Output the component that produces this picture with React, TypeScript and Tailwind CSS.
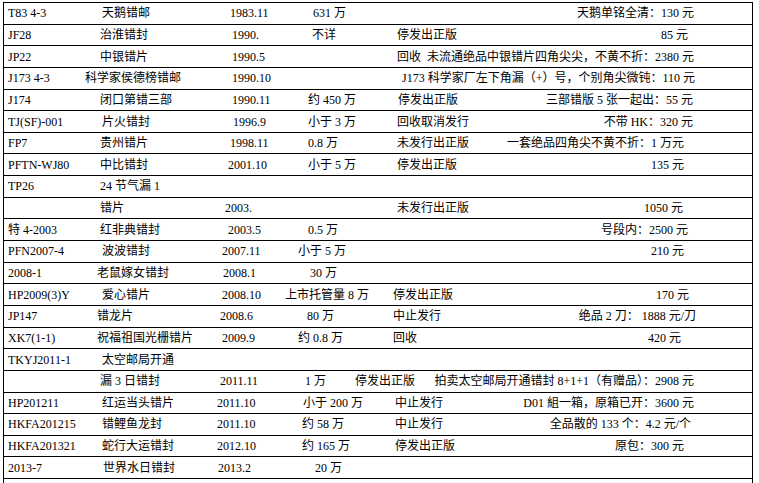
type Row = {
  id?: string;
  name?: string;
  np?: string;
  date?: string;
  dp?: string;
  qty?: string;
  qp?: string;
  st?: string;
  sp?: string;
  price?: string;
  pr?: string;
};

// 邮品错版一览 — offsets mirror the hand-spaced source table
const ROWS: Row[] = [
  { id: "T83 4-3", name: "天鹅错邮", np: "pl-[17px]", date: "1983.11", dp: "pl-[15px]", qty: "631 万", qp: "pl-[30px]", price: "天鹅单铭全清：130 元", pr: "pr-[58px]" },
  { id: "JF28", name: "治淮错封", np: "pl-[15px]", date: "1990.", dp: "pl-[17px]", qty: "不详", qp: "pl-[29px]", st: "停发出正版", sp: "pl-[47px]", price: "85 元", pr: "pr-[64px]" },
  { id: "JP22", name: "中银错片", np: "pl-[15px]", date: "1990.5", dp: "pl-[17px]", st: "回收  未流通绝品中银错片四角尖尖，不黄不折：2380 元", sp: "pl-[47px]" },
  { id: "J173 4-3", name: "科学家侯德榜错邮", np: "pl-[0px]", date: "1990.10", dp: "pl-[17px]", st: "J173 科学家厂左下角漏（+）号，个别角尖微钝：110 元", sp: "pl-[52px]" },
  { id: "J174", name: "闭口第错三部", np: "pl-[15px]", date: "1990.11", dp: "pl-[17px]", qty: "约 450 万", qp: "pl-[25px]", st: "停发出正版", sp: "pl-[48px]", price: "三部错版 5 张一起出：55 元", pr: "pr-[59px]" },
  { id: "TJ(SF)-001", name: "片火错封", np: "pl-[17px]", date: "1996.9", dp: "pl-[18px]", qty: "小于 3 万", qp: "pl-[25px]", st: "回收取消发行", sp: "pl-[47px]", price: "不带 HK：320 元", pr: "pr-[59px]" },
  { id: "FP7", name: "贵州错片", np: "pl-[15px]", date: "1998.11", dp: "pl-[15px]", qty: "0.8 万", qp: "pl-[25px]", st: "未发行出正版", sp: "pl-[47px]", price: "一套绝品四角尖不黄不折：1 万元", pr: "pr-[68px]" },
  { id: "PFTN-WJ80", name: "中比错封", np: "pl-[15px]", date: "2001.10", dp: "pl-[13px]", qty: "小于 5 万", qp: "pl-[25px]", st: "停发出正版", sp: "pl-[47px]", price: "135 元", pr: "pr-[68px]" },
  { id: "TP26", name: "24 节气漏 1", np: "pl-[15px]" },
  { name: "错片", np: "pl-[15px]", date: "2003.", dp: "pl-[10px]", st: "未发行出正版", sp: "pl-[47px]", price: "1050 元", pr: "pr-[69px]" },
  { id: "特 4-2003", name: "红非典错封", np: "pl-[15px]", date: "2003.5", dp: "pl-[13px]", qty: "0.5 万", qp: "pl-[25px]", price: "号段内：2500 元", pr: "pr-[64px]" },
  { id: "PFN2007-4", name: "波波错封", np: "pl-[17px]", date: "2007.11", dp: "pl-[7px]", qty: "小于 5 万", qp: "pl-[15px]", price: "210 元", pr: "pr-[68px]" },
  { id: "2008-1", name: "老鼠嫁女错封", np: "pl-[12px]", date: "2008.1", dp: "pl-[8px]", qty: "30 万", qp: "pl-[27px]" },
  { id: "HP2009(3)Y", name: "爱心错片", np: "pl-[17px]", date: "2008.10", dp: "pl-[7px]", qty: "上市托管量 8 万", qp: "pl-[2px]", st: "停发出正版", sp: "pl-[43px]", price: "170 元", pr: "pr-[63px]" },
  { id: "JP147", name: "错龙片", np: "pl-[12px]", date: "2008.6", dp: "pl-[5px]", qty: "80 万", qp: "pl-[24px]", st: "中止发行", sp: "pl-[43px]", price: "绝品 2 刀： 1888 元/刀", pr: "pr-[56px]" },
  { id: "XK7(1-1)", name: "祝福祖国光栅错片", np: "pl-[12px]", date: "2009.9", dp: "pl-[7px]", qty: "约 0.8 万", qp: "pl-[15px]", st: "回收", sp: "pl-[43px]", price: "420 元", pr: "pr-[71px]" },
  { id: "TKYJ2011-1", name: "太空邮局开通", np: "pl-[17px]" },
  { name: "漏 3 日错封", np: "pl-[15px]", date: "2011.11", dp: "pl-[5px]", qty: "1 万", qp: "pl-[22px]", st: "停发出正版", sp: "pl-[5px]", price: "拍卖太空邮局开通错封 8+1+1（有赠品）：2908 元", pr: "pr-[58px]" },
  { id: "HP201211", name: "红运当头错片", np: "pl-[17px]", date: "2011.10", dp: "pl-[2px]", qty: "小于 200 万", qp: "pl-[20px]", st: "中止发行", sp: "pl-[45px]", price: "D01 組一箱，原箱已开：3600 元", pr: "pr-[58px]" },
  { id: "HKFA201215", name: "错鲤鱼龙封", np: "pl-[17px]", date: "2011.10", dp: "pl-[2px]", qty: "约 58 万", qp: "pl-[19px]", st: "中止发行", sp: "pl-[45px]", price: "全品散的 133 个：4.2 元/个", pr: "pr-[61px]" },
  { id: "HKFA201321", name: "蛇行大运错封", np: "pl-[17px]", date: "2012.10", dp: "pl-[2px]", qty: "约 165 万", qp: "pl-[19px]", st: "停发出正版", sp: "pl-[45px]", price: "原包：300 元", pr: "pr-[68px]" },
  { id: "2013-7", name: "世界水日错封", np: "pl-[18px]", date: "2013.2", dp: "pl-[3px]", qty: "20 万", qp: "pl-[32px]" },
];

function StampRow({ r }: { r: Row }) {
  return (
    <div className="grid min-h-0 flex-1 grid-cols-[81px_130px_68px_67px_1fr] items-center border-b border-black whitespace-pre">
      <span className="pl-[4px]">{r.id}</span>
      <span className={r.np}>{r.name}</span>
      <span className={r.dp}>{r.date}</span>
      <span className={r.qp}>{r.qty}</span>
      <div className="flex items-center">
        <span className={r.sp}>{r.st}</span>
        <span className={`ml-auto ${r.pr ?? ""}`}>{r.price}</span>
      </div>
    </div>
  );
}

export default function App() {
  return (
    <div className="h-[483px] w-[759px] overflow-hidden bg-white pl-[3px] pt-[2px] font-['Liberation_Serif','Noto_Sans_CJK_SC',serif] text-[12px] leading-none text-black">
      <div className="h-[481px] w-[750px] border-l border-r border-t border-black">
        <div className="flex h-[476px] flex-col">
          {ROWS.map((r, i) => (
            <StampRow key={i} r={r} />
          ))}
        </div>
      </div>
    </div>
  );
}
